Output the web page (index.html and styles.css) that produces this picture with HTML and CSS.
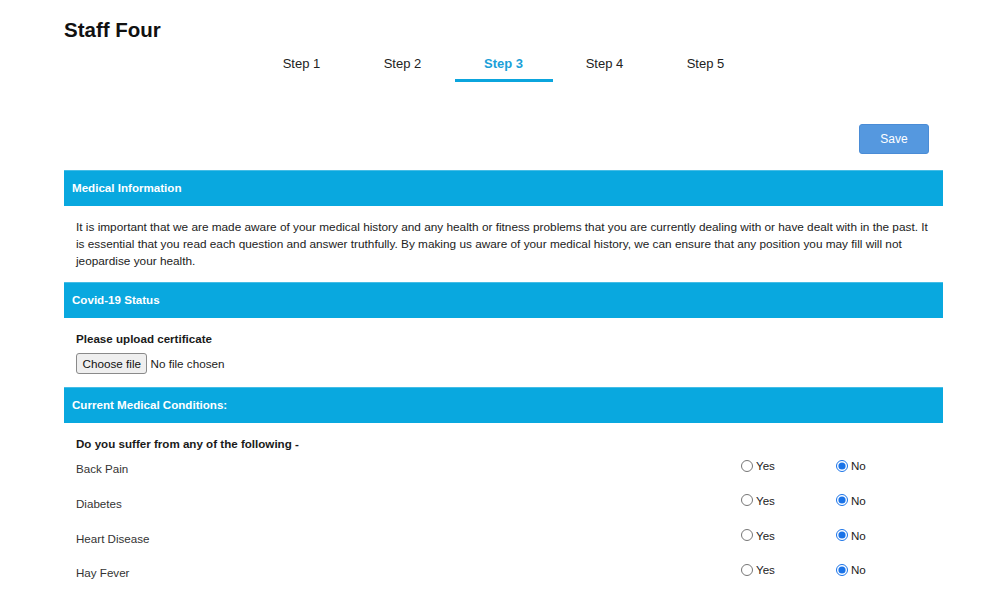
FILE: index.html
```html
<!DOCTYPE html>
<html lang="en">
<head>
<meta charset="utf-8">
<title>Staff Four</title>
<link rel="stylesheet" href="styles.css">
</head>
<body>
<div class="page">
  <h1 class="title">Staff Four</h1>
  <nav class="tabs">
    <div class="tab">Step 1</div>
    <div class="tab">Step 2</div>
    <div class="tab active">Step 3</div>
    <div class="tab">Step 4</div>
    <div class="tab">Step 5</div>
  </nav>
  <div class="actions">
    <button class="save" type="button">Save</button>
  </div>

  <div class="bar">Medical Information</div>
  <p class="intro">It is important that we are made aware of your medical history and any health or fitness problems that you are currently dealing with or have dealt with in the past. It is essential that you read each question and answer truthfully. By making us aware of your medical history, we can ensure that any position you may fill will not jeopardise your health.</p>

  <div class="bar">Covid-19 Status</div>
  <div class="section upload">
    <div class="label-bold">Please upload certificate</div>
    <div class="file">
      <label class="file-btn">Choose file<input class="file-input" type="file"></label>
      <span class="file-name">No file chosen</span>
    </div>
  </div>

  <div class="bar">Current Medical Conditions:</div>
  <div class="section conditions">
    <div class="label-bold">Do you suffer from any of the following -</div>
    <div class="row">
      <div class="cond">Back Pain</div>
      <label class="opt yes"><input type="radio" name="q1"><span>Yes</span></label>
      <label class="opt no"><input type="radio" name="q1" checked><span>No</span></label>
    </div>
    <div class="row">
      <div class="cond">Diabetes</div>
      <label class="opt yes"><input type="radio" name="q2"><span>Yes</span></label>
      <label class="opt no"><input type="radio" name="q2" checked><span>No</span></label>
    </div>
    <div class="row">
      <div class="cond">Heart Disease</div>
      <label class="opt yes"><input type="radio" name="q3"><span>Yes</span></label>
      <label class="opt no"><input type="radio" name="q3" checked><span>No</span></label>
    </div>
    <div class="row">
      <div class="cond">Hay Fever</div>
      <label class="opt yes"><input type="radio" name="q4"><span>Yes</span></label>
      <label class="opt no"><input type="radio" name="q4" checked><span>No</span></label>
    </div>
  </div>
</div>
</body>
</html>
```
FILE: styles.css
```css
* { box-sizing: border-box; }
html, body { margin: 0; padding: 0; background: #fff; }
body {
  font-family: "Liberation Sans", Arial, Helvetica, sans-serif;
  color: #222;
  font-size: 11.6px;
}
.page {
  margin: 0 57px 0 64px;
  padding-top: 18px;
}
.title {
  margin: 0;
  font-size: 20.5px;
  line-height: 24px;
  font-weight: bold;
  color: #111;
}
.tabs {
  display: flex;
  justify-content: center;
  gap: 3px;
  margin-top: 14px;
}
.tab {
  width: 98px;
  text-align: center;
  font-size: 13px;
  line-height: 16px;
  padding-bottom: 7px;
  border-bottom: 3px solid transparent;
  color: #222;
}
.tab.active {
  color: #1a9fd8;
  font-weight: bold;
  border-bottom-color: #0ba5dd;
}
.actions {
  display: flex;
  justify-content: flex-end;
  margin-top: 42px;
  padding-right: 14px;
}
.save {
  width: 70px;
  height: 30px;
  background: #5598df;
  border: 1px solid #4a8cd6;
  border-radius: 3px;
  color: #fff;
  font-family: "Liberation Sans", Arial, sans-serif;
  font-size: 12px;
  padding: 0;
}
.bar {
  margin-top: 16px;
  height: 36px;
  line-height: 33px;
  background: #09a8df;
  border-top: 1px solid #45bde6;
  color: #fff;
  font-weight: bold;
  font-size: 11.6px;
  padding-left: 8px;
}
.intro + .bar, .section + .bar { margin-top: 0; }
.intro {
  margin: 0;
  padding: 12.5px 12px 11px;
  font-size: 11.8px;
  line-height: 17.4px;
  color: #222;
}
.section {
  padding: 12px 12px 0;
}
.label-bold {
  font-weight: bold;
  line-height: 17px;
  color: #1a1a1a;
}
.upload { padding-bottom: 13px; }
.file {
  display: flex;
  align-items: center;
  gap: 3px;
  margin-top: 6px;
  height: 21px;
  font-size: 11.7px;
  color: #222;
}
.file-btn {
  display: flex;
  align-items: center;
  height: 21px;
  padding: 0 5.5px;
  background: #efefef;
  border: 1px solid #8a8a8a;
  border-radius: 3px;
  color: #111;
}
.file-input { display: none; }
.file-name { color: #222; }
.conditions .label-bold { margin-bottom: 8.5px; }
.row {
  display: flex;
  align-items: flex-start;
  height: 34.7px;
}
.cond {
  width: 665px;
  line-height: 17px;
  color: #333;
}
.opt {
  display: flex;
  align-items: center;
  gap: 3px;
  margin-top: -3px;
  line-height: 17px;
  color: #222;
}
.opt input {
  margin: 0;
  width: 12px;
  height: 12px;
  accent-color: #1a73e8;
}
.opt.yes { width: 95px; }
```
